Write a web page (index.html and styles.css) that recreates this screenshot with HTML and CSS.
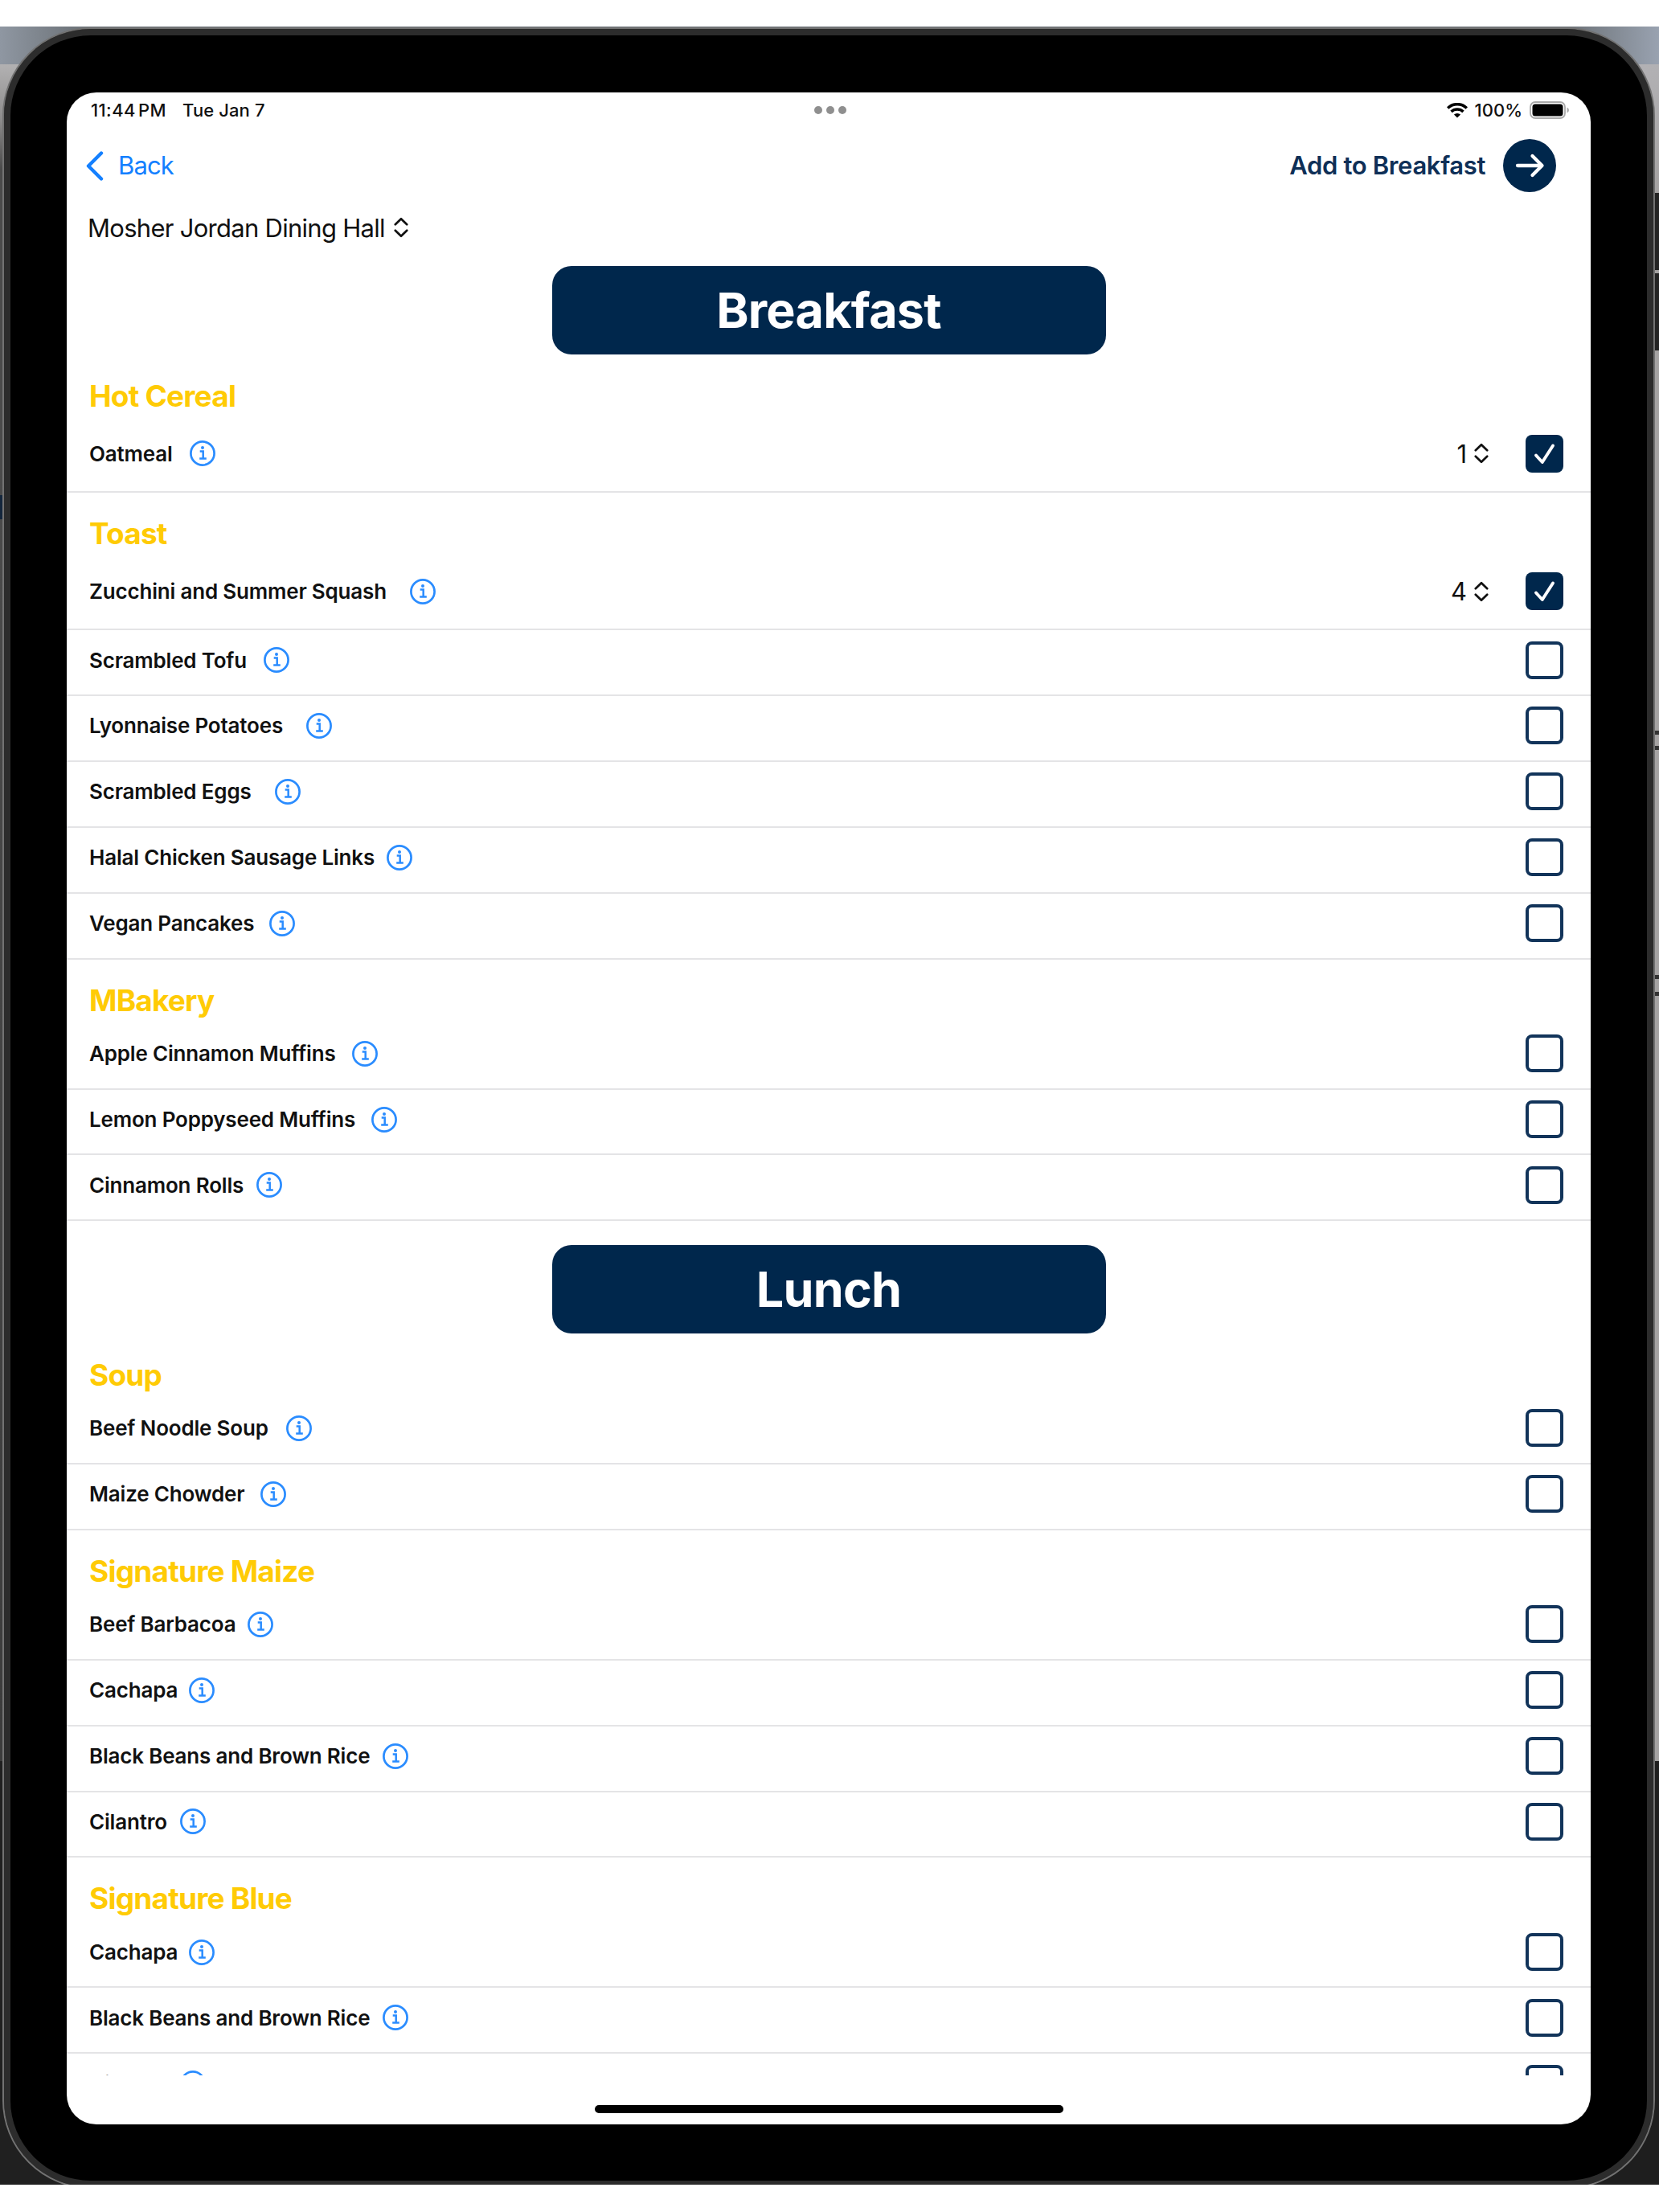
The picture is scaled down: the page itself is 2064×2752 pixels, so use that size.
FILE: index.html
```html
<!DOCTYPE html>
<html lang="en">
<head>
<meta charset="utf-8">
<title>Dining menu</title>
<link rel="stylesheet" href="styles.css">
</head>
<body>
<svg class="defs" width="0" height="0" aria-hidden="true">
  <symbol id="info" viewBox="0 0 32 32"><g fill="none" stroke="currentColor"><circle cx="16" cy="16" r="14.600" stroke-width="2.700"/><path d="M12.700 13.600h4v9M12.200 22.500h8.600" stroke-width="2.500"/></g><circle cx="16" cy="8.900" r="2" fill="currentColor"/></symbol>
  <symbol id="updown" viewBox="0 0 18 26"><path d="M1.800 9.200 9 2.200l7.200 7M1.800 16.800 9 23.800l7.200-7" fill="none" stroke="currentColor" stroke-width="2.700" stroke-linecap="round" stroke-linejoin="round"/></symbol>
  <symbol id="check" viewBox="0 0 47 47"><path d="M13 25.500 20.800 34 34 13.500" fill="none" stroke="#fff" stroke-width="3.900" stroke-linecap="round" stroke-linejoin="round"/></symbol>
</svg>
<div class="backdrop">
  <span class="strip left-light"></span><span class="strip left-mark"></span><span class="strip left-dark"></span>
  <span class="strip right-light"></span><span class="strip right-panel"></span><span class="strip right-panel low"></span>
  <span class="strip right-mark m1"></span><span class="strip right-mark m2"></span><span class="strip right-mark m3"></span><span class="strip right-mark m4"></span>
  <span class="strip right-dark"></span>
  <div class="device">
    <main class="screen">
      <header class="status">
        <div class="clock"><span class="time">11:44 PM</span><span class="date">Tue Jan 7</span></div>
        <div class="dots"><i></i><i></i><i></i></div>
        <div class="power">
          <svg class="wifi" width="26" height="19" viewBox="0 0 26 19"><g fill="none" stroke="#000" stroke-width="3.500"><path d="M1.200 6.400a17 17 0 0 1 23.600 0"/><path d="M5.500 10.900a11 11 0 0 1 15 0"/></g><path d="M13 18.500 8.900 14.600a6 6 0 0 1 8.200 0z"/></svg>
          <span class="percent">100%</span>
          <svg class="battery" width="50" height="22" viewBox="0 0 50 22"><rect x="1" y="1" width="43" height="20" rx="6" fill="none" stroke="#aaa" stroke-width="1.800"/><rect x="3.500" y="3.500" width="38" height="15" rx="3.500"/><path d="M46.500 7.500q2.500 1 2.500 3.500t-2.500 3.500z" fill="#aaa"/></svg>
        </div>
      </header>
      <nav class="nav">
        <a class="back"><svg width="22" height="37" viewBox="0 0 22 37"><path d="M19 2.500 3 18.500l16 16" fill="none" stroke="currentColor" stroke-width="4.400" stroke-linecap="round" stroke-linejoin="round"/></svg><span>Back</span></a>
        <a class="add"><span>Add to Breakfast</span><svg width="66" height="66" viewBox="0 0 66 66"><circle cx="33" cy="33" r="33" fill="#00274c"/><path d="M18 33h30M36.500 21 48.500 33 36.500 45" fill="none" stroke="#fff" stroke-width="4.300" stroke-linecap="round" stroke-linejoin="round"/></svg></a>
      </nav>
      <div class="hall"><span>Mosher Jordan Dining Hall</span><svg class="updown"><use href="#updown"/></svg></div>
      <div class="menu">
        <h1 class="meal">Breakfast</h1>
        <h2 class="station">Hot Cereal</h2>
        <div class="item chosen"><span class="name" style="width:125px">Oatmeal</span><svg class="info"><use href="#info"/></svg><span class="count">1</span><svg class="updown"><use href="#updown"/></svg><span class="box on"><svg><use href="#check"/></svg></span></div>
        <h2 class="station">Toast</h2>
        <div class="item chosen"><span class="name" style="width:398.500px">Zucchini and Summer Squash</span><svg class="info"><use href="#info"/></svg><span class="count">4</span><svg class="updown"><use href="#updown"/></svg><span class="box on"><svg><use href="#check"/></svg></span></div>
        <div class="item"><span class="name" style="width:216.500px">Scrambled Tofu</span><svg class="info"><use href="#info"/></svg><span class="box"></span></div>
        <div class="item"><span class="name" style="width:269.500px">Lyonnaise Potatoes</span><svg class="info"><use href="#info"/></svg><span class="box"></span></div>
        <div class="item"><span class="name" style="width:230.500px">Scrambled Eggs</span><svg class="info"><use href="#info"/></svg><span class="box"></span></div>
        <div class="item"><span class="name" style="width:369.500px">Halal Chicken Sausage Links</span><svg class="info"><use href="#info"/></svg><span class="box"></span></div>
        <div class="item"><span class="name" style="width:224px">Vegan Pancakes</span><svg class="info"><use href="#info"/></svg><span class="box"></span></div>
        <h2 class="station">MBakery</h2>
        <div class="item"><span class="name" style="width:327px">Apple Cinnamon Muffins</span><svg class="info"><use href="#info"/></svg><span class="box"></span></div>
        <div class="item"><span class="name" style="width:350.500px">Lemon Poppyseed Muffins</span><svg class="info"><use href="#info"/></svg><span class="box"></span></div>
        <div class="item"><span class="name" style="width:207.500px">Cinnamon Rolls</span><svg class="info"><use href="#info"/></svg><span class="box"></span></div>
        <h1 class="meal next">Lunch</h1>
        <h2 class="station">Soup</h2>
        <div class="item"><span class="name" style="width:244.500px">Beef Noodle Soup</span><svg class="info"><use href="#info"/></svg><span class="box"></span></div>
        <div class="item"><span class="name" style="width:212.500px">Maize Chowder</span><svg class="info"><use href="#info"/></svg><span class="box"></span></div>
        <h2 class="station">Signature Maize</h2>
        <div class="item"><span class="name" style="width:196.500px">Beef Barbacoa</span><svg class="info"><use href="#info"/></svg><span class="box"></span></div>
        <div class="item"><span class="name" style="width:123.500px">Cachapa</span><svg class="info"><use href="#info"/></svg><span class="box"></span></div>
        <div class="item"><span class="name" style="width:365px">Black Beans and Brown Rice</span><svg class="info"><use href="#info"/></svg><span class="box"></span></div>
        <div class="item"><span class="name" style="width:113px">Cilantro</span><svg class="info"><use href="#info"/></svg><span class="box"></span></div>
        <h2 class="station">Signature Blue</h2>
        <div class="item"><span class="name" style="width:123.500px">Cachapa</span><svg class="info"><use href="#info"/></svg><span class="box"></span></div>
        <div class="item"><span class="name" style="width:365px">Black Beans and Brown Rice</span><svg class="info"><use href="#info"/></svg><span class="box"></span></div>
        <div class="item"><span class="name" style="width:113px">Cilantro</span><svg class="info"><use href="#info"/></svg><span class="box"></span></div>
      </div>
      <footer class="home"><span></span></footer>
    </main>
  </div>
</div>
</body>
</html>
```
FILE: styles.css
```css
* { box-sizing: border-box; }
body { margin: 0; background: #fff; color: #111; font-family: Inter, sans-serif; }
svg { display: block; flex: none; }
.defs { position: absolute; }

/* desktop seen behind the tablet */
.backdrop {
  position: relative;
  height: 2685px;
  margin-top: 33px;
  padding: 1px 5px 0 3px;
  overflow: hidden;
  background: linear-gradient(90deg, #8f97a2, #70767c 90px, #70767c 1960px, #99a2b0);
}
.strip { position: absolute; }
.left-light { left: 0; top: 47px; width: 200px; height: 2111px; background: linear-gradient(#b2b1b2, #8c8b8b 70px, #4b4b4b 130px, #4b4b4b 500px, #3c3c3c); }
.left-mark { left: 0; top: 583px; width: 5px; height: 30px; background: #14263c; }
.left-dark { left: 0; top: 2158px; width: 200px; height: 527px; background: #202020; }
.right-light { right: 0; top: 47px; width: 200px; height: 2111px; background: linear-gradient(#b2b1b4, #a5a3a3 150px, #a5a3a3); }
.right-panel { right: 0; top: 207px; width: 5px; height: 96px; background: #232323; }
.right-panel.low { top: 307px; }
.right-mark { right: 0; width: 5px; height: 5px; background: #333; }
.m1 { top: 876px; } .m2 { top: 895px; } .m3 { top: 1180px; } .m4 { top: 1201px; }
.right-dark { right: 0; top: 2158px; width: 200px; height: 527px; background: #1e1e1e; }

.device {
  position: relative;
  height: 2689px;
  border: 2px solid #727272;
  border-radius: 110px;
  background: #000;
  box-shadow: inset 0 0 0 8px #2c2c2c;
  padding: 79px 78px 0;
}
.screen {
  display: flex;
  flex-direction: column;
  height: 2528px;
  border-radius: 37px;
  background: #fff;
  overflow: hidden;
}

.status { display: grid; grid-template-columns: 1fr auto 1fr; align-items: center; height: 44px; padding: 0 26px 0 30px; font-size: 22px; font-weight: 500; }
.clock { display: flex; gap: 20px; }
.time { letter-spacing: 0.400px; word-spacing: -3px; }
.date { letter-spacing: 0.100px; }
.dots { display: flex; gap: 5px; }
.dots i { width: 10px; height: 10px; border-radius: 50%; background: #8f8f8f; }
.power { display: flex; justify-content: flex-end; align-items: center; gap: 9px; }

.nav { display: flex; justify-content: space-between; align-items: center; height: 94px; padding: 0 43px 0 24px; font-size: 31px; }
.nav span { position: relative; top: -1px; }
.back { display: flex; align-items: center; gap: 18px; color: #1480ff; letter-spacing: -0.850px; }
.add { display: flex; align-items: center; gap: 22px; color: #0e2f57; font-weight: 600; letter-spacing: -0.350px; }
.hall { display: flex; align-items: center; gap: 11px; height: 60px; padding-left: 26px; font-size: 31px; letter-spacing: -0.720px; }
.updown { width: 18px; height: 26px; }

.menu { height: 2269px; padding-top: 18px; overflow: hidden; }
.meal { width: 689px; height: 110px; margin: 0 auto; border-radius: 24px; background: #00274c; color: #fff; font-size: 61px; font-weight: 700; line-height: 111px; letter-spacing: -0.750px; text-align: center; }
.meal.next { margin-top: 30px; }
.station { height: 80.200px; margin: 0; padding: 29px 28px 0; color: #ffcb05; font-size: 37px; font-weight: 700; line-height: 44px; letter-spacing: -0.800px; white-space: nowrap; }
.meal + .station { height: 80.600px; padding-top: 30px; }
.item { display: flex; align-items: center; height: 81.880px; padding: 0 34px 6px 28px; border-bottom: 2px solid #e4e4e6; }
.item.chosen { height: 91.200px; padding-bottom: 4px; }
.name { font-size: 26px; font-weight: 600; letter-spacing: -0.190px; white-space: nowrap; }
.info { width: 32px; height: 32px; color: #2a8cff; }
.count { margin-left: auto; margin-right: 9px; font-size: 31px; }
.box { width: 47px; height: 47px; margin-left: auto; border: 4px solid #12345a; border-radius: 8px; }
.box.on { margin-left: 46px; border: 0; background: #00274c; }
.box.on svg { width: 47px; height: 47px; }

.home { display: flex; justify-content: center; padding-top: 37px; }
.home span { width: 583px; height: 10px; border-radius: 5px; background: #000; }
```
